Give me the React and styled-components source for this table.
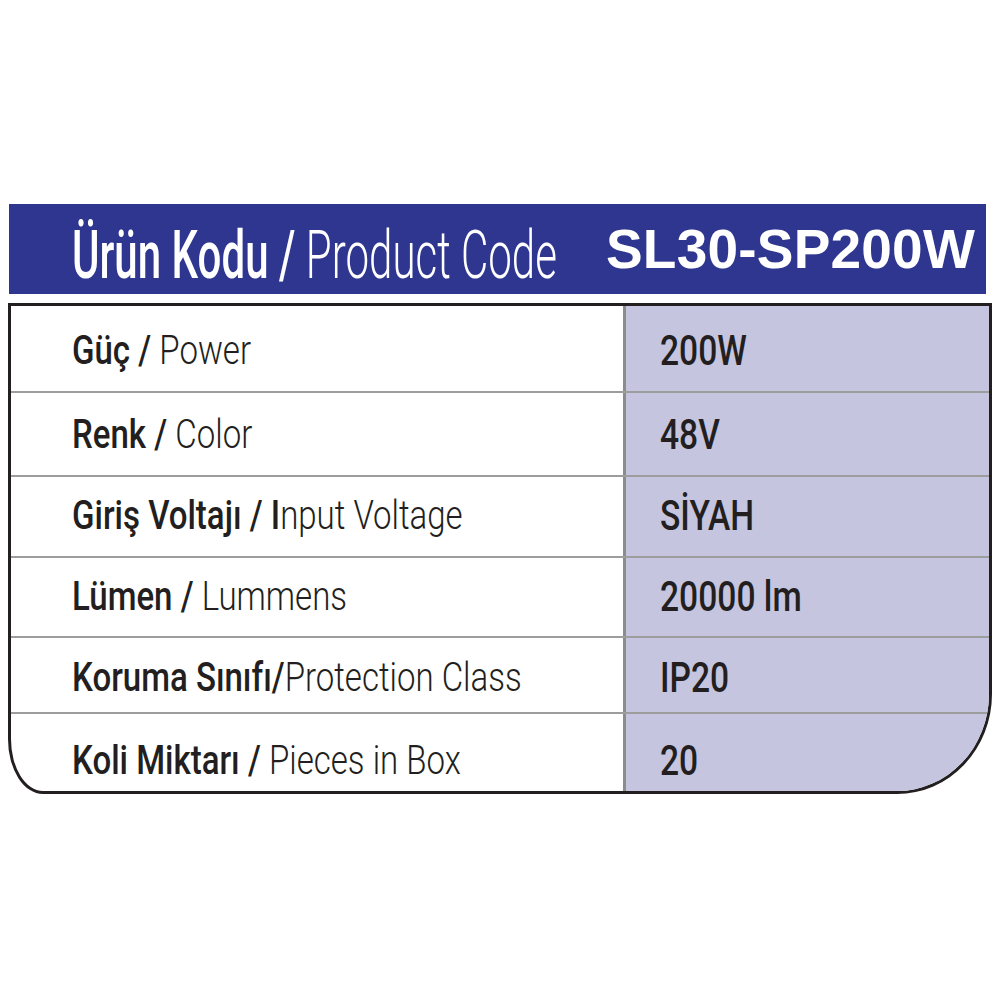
import React from 'react';
import styled, { createGlobalStyle } from 'styled-components';

const GlobalStyle = createGlobalStyle`
  html, body {
    margin: 0;
    padding: 0;
    background: #ffffff;
  }
  body {
    font-family: "Liberation Sans", Arial, sans-serif;
    color: #231f20;
  }
`;

const rows = [
  { bold: 'Güç / ', light: 'Power', value: '200W', h: 85, shift: 5 },
  { bold: 'Renk / ', light: 'Color', value: '48V', h: 82, shift: 2 },
  { bold: 'Giriş Voltajı / I', light: 'nput Voltage', value: 'SİYAH', h: 79, shift: -2 },
  { bold: 'Lümen / ', light: 'Lummens', value: '20000 lm', h: 78, shift: 0 },
  { bold: 'Koruma Sınıfı/', light: 'Protection Class', value: 'IP20', h: 74, shift: 6 },
  { bold: 'Koli Miktarı / ', light: 'Pieces in Box', value: '20', h: 77, shift: 16 },
];

// shifts the centred text down (positive) or up (negative)
const offset = (shift, left) =>
  shift >= 0 ? `${shift}px 0 0 ${left}px` : `0 0 ${-shift}px ${left}px`;

const App = () => {
  return (
    <>
      <GlobalStyle />
      <Wrapper>
        <Header>
          <Title>
            <Squeeze x={0.637}>
              <b>Ürün Kodu / </b>Product Code
            </Squeeze>
          </Title>
          <Code>SL30-SP200W</Code>
        </Header>
        <Table>
          {rows.map((r, i) => (
            <Row key={i} h={r.h} first={i === 0}>
              <Label shift={r.shift}>
                <Squeeze x={0.825}>
                  <b>{r.bold}</b>{r.light}
                </Squeeze>
              </Label>
              <Value shift={r.shift}>
                <Squeeze x={0.8}>{r.value}</Squeeze>
              </Value>
            </Row>
          ))}
        </Table>
      </Wrapper>
    </>
  );
};

export default App;

const Wrapper = styled.div`
  width: 984px;
  padding: 204px 0 0 8px;
`;

const Header = styled.div`
  display: flex;
  align-items: center;
  height: 90px;
  margin: 0 6px 9px 1px;
  padding: 0 11px 0 63px;
  background: #2e3690;
  color: #ffffff;
`;

const Title = styled.div`
  flex: 1;
  min-width: 0;
  margin-top: 13px;
  font-family: Roboto, "Liberation Sans", sans-serif;
  font-size: 66px;
  line-height: 1;
  font-weight: 300;
  white-space: nowrap;

  & b {
    font-weight: 500;
  }
`;

const Code = styled.div`
  flex: none;
  font-size: 55px;
  line-height: 1;
  font-weight: 700;
  letter-spacing: 0.2px;
`;

const Squeeze = styled.span`
  display: inline-block;
  white-space: pre;
  transform: scaleX(${(p) => p.x});
  transform-origin: left center;
`;

const Table = styled.div`
  height: 485px;
  border: 3px solid #231f20;
  border-radius: 0 0 95px 35px / 0 0 100px 55px;
  overflow: hidden;
`;

const Row = styled.div`
  display: grid;
  grid-template-columns: 612px 1fr;
  height: ${(p) => p.h}px;
  border-top: ${(p) => (p.first ? 'none' : '2px solid #9d9d9d')};
`;

const Label = styled.div`
  display: flex;
  align-items: center;
  padding: ${(p) => offset(p.shift, 61)};
  font-family: Roboto, "Liberation Sans", sans-serif;
  font-size: 40px;
  line-height: 1;
  font-weight: 300;
  color: #231f20;

  & b {
    font-weight: 500;
  }
`;

const Value = styled.div`
  display: flex;
  align-items: center;
  padding: ${(p) => offset(p.shift, 34)};
  background: #c5c5e0;
  border-left: 3px solid #8c8c8c;
  font-family: Roboto, "Liberation Sans", sans-serif;
  font-size: 42px;
  line-height: 1;
  font-weight: 500;
  color: #231f20;
`;
